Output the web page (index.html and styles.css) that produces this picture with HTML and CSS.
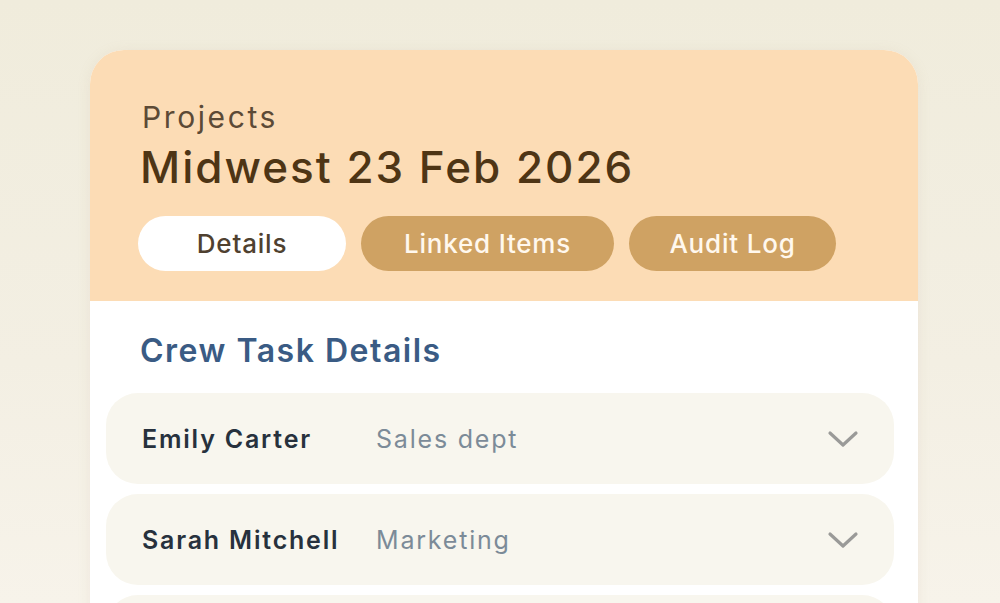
FILE: index.html
```html
<!DOCTYPE html>
<html>
<head>
<meta charset="utf-8">
<link rel="stylesheet" href="styles.css">
</head>
<body>
<div class="page">
  <div class="card">
    <div class="header">
      <div class="eyebrow">Projects</div>
      <div class="title">Midwest 23 Feb 2026</div>
      <div class="tabs">
        <div class="tab active">Details</div>
        <div class="tab">Linked Items</div>
        <div class="tab">Audit Log</div>
      </div>
    </div>
    <div class="body">
      <div class="section-title">Crew Task Details</div>
      <div class="rows">
        <div class="row">
          <span class="name">Emily Carter</span>
          <span class="dept">Sales dept</span>
          <svg class="chev" viewBox="0 0 32 20" width="32" height="20"><path d="M3 4 L16 16 L29 4" fill="none" stroke="#9a9a98" stroke-width="3.2" stroke-linecap="round" stroke-linejoin="round"/></svg>
        </div>
        <div class="row">
          <span class="name">Sarah Mitchell</span>
          <span class="dept">Marketing</span>
          <svg class="chev" viewBox="0 0 32 20" width="32" height="20"><path d="M3 4 L16 16 L29 4" fill="none" stroke="#9a9a98" stroke-width="3.2" stroke-linecap="round" stroke-linejoin="round"/></svg>
        </div>
        <div class="row"></div>
      </div>
    </div>
  </div>
</div>
</body>
</html>
```
FILE: styles.css
```css
html, body {
  margin: 0;
  padding: 0;
  height: 100%;
  overflow: hidden;
}
body {
  background: linear-gradient(180deg, #f0ecdc 0%, #f3efe3 60%, #f7f3ea 100%);
  font-family: "Inter", "Open Sans", sans-serif;
}
.page {
  padding: 50px 82px 0 90px;
}
.card {
  background: #ffffff;
  border-radius: 34px 34px 0 0;
  overflow: hidden;
  box-shadow: 0 2px 14px rgba(180, 160, 120, 0.12);
  height: 600px;
}
.header {
  background: #fcdcb5;
  padding: 50px 50px 30px 50px;
}
.eyebrow {
  font-size: 30px;
  color: #5c4a36;
  line-height: 34px;
  letter-spacing: 2.6px;
  margin-left: 2px;
}
.title {
  font-size: 44px;
  font-weight: 500;
  color: #4e3515;
  line-height: 54px;
  margin-top: 6px;
  letter-spacing: 2px;
}
.tabs {
  display: flex;
  gap: 15px;
  margin-top: 22px;
  margin-left: -2px;
}
.tab {
  height: 55px;
  border-radius: 28px;
  background: #cfa263;
  color: #fff8ee;
  font-size: 26px;
  font-weight: 500;
  letter-spacing: 0.8px;
  display: flex;
  align-items: center;
  justify-content: center;
  box-sizing: border-box;
}
.tab.active {
  background: #ffffff;
  color: #4f4130;
}
.tab:nth-child(1) { width: 208px; }
.tab:nth-child(2) { width: 253px; }
.tab:nth-child(3) { width: 207px; }
.body {
  padding: 30px 24px 0 16px;
}
.section-title {
  font-size: 32px;
  font-weight: 600;
  color: #3a5b84;
  padding-left: 34px;
  line-height: 40px;
  letter-spacing: 1.5px;
}
.rows {
  display: flex;
  flex-direction: column;
  gap: 10px;
  margin-top: 22px;
}
.row {
  height: 91px;
  border-radius: 32px;
  background: #f8f6ee;
  display: flex;
  align-items: center;
  padding: 0 32px 0 36px;
}
.name {
  font-size: 25px;
  font-weight: 600;
  color: #27313d;
  width: 234px;
  letter-spacing: 1.8px;
}
.dept {
  font-size: 25px;
  color: #7c8b98;
  flex: 1;
  letter-spacing: 1.8px;
}
.chev {
  margin-right: 3px;
}
```
